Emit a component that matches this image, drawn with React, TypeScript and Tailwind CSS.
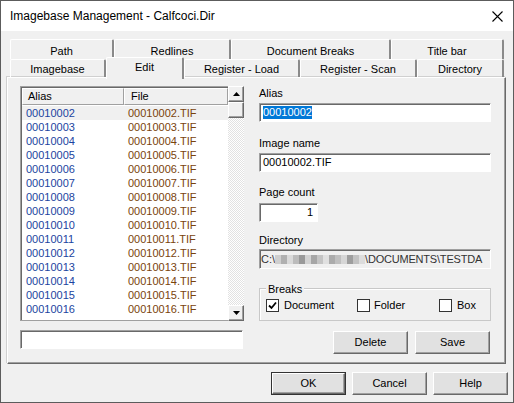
import React from 'react';

const rows = Array.from({ length: 15 }, (_, i) => String(10002 + i).padStart(8, '0'));

const backTabs = [
  { label: 'Path', w: 'w-[104px]' },
  { label: 'Redlines', w: 'w-[117px]' },
  { label: 'Document Breaks', w: 'w-[160px]' },
  { label: 'Title bar', w: 'w-[113px]' },
];

const frontTabs = [
  { label: 'Imagebase', w: 'w-[96px]' },
  { label: 'Edit', w: 'w-[78px]', active: true },
  { label: 'Register - Load', w: 'w-[116px]' },
  { label: 'Register - Scan', w: 'w-[117px]' },
  { label: 'Directory', w: 'w-[87px]' },
];

// pixelated blur over the user name in the directory path
const blur = ['#cfcfcf', '#b0b0b0', '#dadada', '#bcbcbc', '#999999', '#d2d2d2', '#a6a6a6', '#c4c4c4', '#e0e0e0', '#ababab', '#bfbfbf', '#d6d6d6', '#9e9e9e', '#c2c2c2', '#dcdcdc'];

function Button({ label, isDefault }: { label: string; isDefault?: boolean }) {
  return (
    <div className={`w-[75px] h-[23px] flex ${isDefault ? 'border border-[#333]' : ''}`}>
      <div className="flex-1 flex items-center justify-center bg-[#e1e1e1] border-t border-l border-white border-r border-b border-r-[#696969] border-b-[#696969] shadow-[inset_-1px_-1px_0_#a0a0a0] text-black">
        {label}
      </div>
    </div>
  );
}

function Checkbox({ checked }: { checked?: boolean }) {
  return (
    <div className="w-[13px] h-[13px] bg-white border border-[#333] flex items-center justify-center">
      {checked && (
        <svg width="9" height="9" viewBox="0 0 9 9">
          <path d="M1 4.5 L3.5 7 L8 1.5" stroke="#000" strokeWidth="1.8" fill="none" />
        </svg>
      )}
    </div>
  );
}

function ArrowBtn({ up }: { up?: boolean }) {
  return (
    <div className="w-[16px] h-[16px] bg-[#f0f0f0] border-t border-l border-white border-r border-b border-r-[#696969] border-b-[#696969] shadow-[inset_-1px_-1px_0_#a0a0a0] flex items-center justify-center">
      <svg width="7" height="4" viewBox="0 0 7 4">
        {up ? <path d="M0 4 L3.5 0 L7 4 Z" fill="#000" /> : <path d="M0 0 L3.5 4 L7 0 Z" fill="#000" />}
      </svg>
    </div>
  );
}

export default function App() {
  return (
    <div className="w-[514px] h-[403px] flex flex-col border border-[#5c5c5c] bg-[#f0f0f0] text-[11px] text-black font-['Liberation_Sans',Arial,sans-serif] overflow-hidden">
      {/* title bar */}
      <div className="h-[30px] bg-white flex items-center justify-between pl-[9px] pr-[9px] shrink-0">
        <span className="text-[12px]">Imagebase Management - Calfcoci.Dir</span>
        <svg width="11" height="11" viewBox="0 0 11 11" className="mr-[1px]">
          <path d="M0.5 0.5 L10.5 10.5 M10.5 0.5 L0.5 10.5" stroke="#000" strokeWidth="1.1" />
        </svg>
      </div>

      <div className="flex-1 flex flex-col pt-[8px]">
        {/* back tab row */}
        <div className="flex ml-[9px] h-[20px]">
          {backTabs.map((t) => (
            <div
              key={t.label}
              className={`${t.w} h-[20px] flex justify-center pt-[3px] rounded-t-[2px] border-t border-l border-white border-r-2 border-r-[#8a8a8a]`}
            >
              {t.label}
            </div>
          ))}
        </div>
        {/* front tab row */}
        <div className="flex ml-[9px] h-[18px] relative z-10">
          {frontTabs.map((t) =>
            t.active ? (
              <div
                key={t.label}
                className={`${t.w} h-[22px] -mt-[2px] flex justify-center pt-[1px] bg-[#f0f0f0] rounded-t-[2px] border-t border-l border-white border-r-2 border-r-[#8a8a8a]`}
              >
                {t.label}
              </div>
            ) : (
              <div
                key={t.label}
                className={`${t.w} h-[18px] flex justify-center pt-[1px] rounded-t-[2px] border-t border-l border-white border-r-2 border-r-[#8a8a8a]`}
              >
                {t.label}
              </div>
            )
          )}
        </div>

        {/* tab panel */}
        <div className="ml-[6px] w-[499px] h-[287px] border-t border-l border-white border-r border-b border-r-[#696969] border-b-[#696969] shadow-[inset_-1px_-1px_0_#a0a0a0,-1px_-1px_0_#d0d0d0] flex pl-[12px] pt-[8px]">
          {/* left column */}
          <div className="w-[224px] flex flex-col">
            <div className="h-[235px] flex">
              <div className="w-[208px] h-full border-t border-l border-b border-[#a0a0a0] shadow-[inset_1px_1px_0_#696969] bg-white flex flex-col pl-[1px] pt-[1px]">
                <div className="h-[17px] flex shrink-0">
                  <div className="w-[102px] bg-[#f0f0f0] border-t border-l border-white border-r border-b border-r-[#a0a0a0] border-b-[#a0a0a0] pl-[5px] flex items-center">Alias</div>
                  <div className="flex-1 bg-[#f0f0f0] border-t border-l border-white border-r border-b border-r-[#a0a0a0] border-b-[#a0a0a0] pl-[6px] flex items-center">File</div>
                </div>
                <div className="flex flex-col pt-[1px]">
                  {rows.map((r, i) => (
                    <div key={r} className={`h-[14px] flex items-center ${i === 0 ? 'bg-[#f0f0f0]' : ''}`}>
                      <span className="w-[106px] pl-[4px] text-[#1b44a0]">{r}</span>
                      <span className="text-[#7a430c]">{r}.TIF</span>
                    </div>
                  ))}
                </div>
              </div>
              <div className="w-[16px] h-full flex flex-col bg-[repeating-conic-gradient(#ffffff_0%_25%,#e2e2e2_0%_50%)] bg-[length:2px_2px]">
                <ArrowBtn up />
                <div className="w-[16px] h-[16px] bg-[#f0f0f0] border-t border-l border-white border-r border-b border-r-[#696969] border-b-[#696969] shadow-[inset_-1px_-1px_0_#a0a0a0]" />
                <div className="flex-1" />
                <ArrowBtn />
              </div>
            </div>
            <div className="mt-[9px] w-[223px] h-[19px] bg-white border-t border-l border-[#a0a0a0] border-r border-b border-r-white border-b-white shadow-[inset_1px_1px_0_#696969]" />
          </div>

          {/* right column */}
          <div className="ml-[15px] w-[232px] flex flex-col">
            <div className="h-[14px] leading-[14px]">Alias</div>
            <div className="mt-[3px] h-[19px] bg-white border-t border-l border-[#a0a0a0] border-r border-b border-r-white border-b-white shadow-[inset_1px_1px_0_#696969] flex items-center pl-[3px]">
              <span className="bg-[#0078d7] text-white leading-[13px]">00010002</span>
            </div>

            <div className="mt-[14px] h-[14px] leading-[14px]">Image name</div>
            <div className="mt-[3px] h-[19px] bg-white border-t border-l border-[#a0a0a0] border-r border-b border-r-white border-b-white shadow-[inset_1px_1px_0_#696969] flex items-center pl-[3px]">
              00010002.TIF
            </div>

            <div className="mt-[13px] h-[14px] leading-[14px]">Page count</div>
            <div className="mt-[4px] w-[59px] h-[19px] bg-white border-t border-l border-[#a0a0a0] border-r border-b border-r-white border-b-white shadow-[inset_1px_1px_0_#696969] flex items-center justify-end pr-[4px]">
              1
            </div>

            <div className="mt-[11px] h-[14px] leading-[14px]">Directory</div>
            <div className="mt-[2px] h-[20px] bg-[#f0f0f0] border-t border-l border-[#a0a0a0] border-r border-b border-r-white border-b-white shadow-[inset_1px_1px_0_#696969] flex items-center pl-[1px] overflow-hidden whitespace-nowrap text-[#333]">
              <span>C:\</span>
              <span className="flex h-[9px]">
                {blur.map((c, i) => (
                  <span key={i} className="w-[6px] h-[9px]" style={{ background: c }} />
                ))}
              </span>
              <span className="tracking-[-0.2px]">\DOCUMENTS\TESTDA</span>
            </div>

            {/* breaks group */}
            <div className="mt-[19px] h-[33px] border border-[#c8c8c8] shadow-[inset_1px_1px_0_#ffffff] relative flex items-center pl-[6px] pt-[2px]">
              <span className="absolute -top-[8px] left-[6px] bg-[#f0f0f0] px-[2px]">Breaks</span>
              <div className="w-[91px] flex items-center">
                <Checkbox checked />
                <span className="ml-[5px]">Document</span>
              </div>
              <div className="w-[82px] flex items-center">
                <Checkbox />
                <span className="ml-[4px]">Folder</span>
              </div>
              <div className="flex items-center">
                <Checkbox />
                <span className="ml-[5px]">Box</span>
              </div>
            </div>

            <div className="mt-[10px] flex justify-end gap-[7px] pr-[1px]">
              <Button label="Delete" />
              <Button label="Save" />
            </div>
          </div>
        </div>

        {/* dialog buttons */}
        <div className="mt-[8px] flex justify-end gap-[6px] pr-[5px]">
          <Button label="OK" isDefault />
          <Button label="Cancel" />
          <Button label="Help" />
        </div>
      </div>
    </div>
  );
}
